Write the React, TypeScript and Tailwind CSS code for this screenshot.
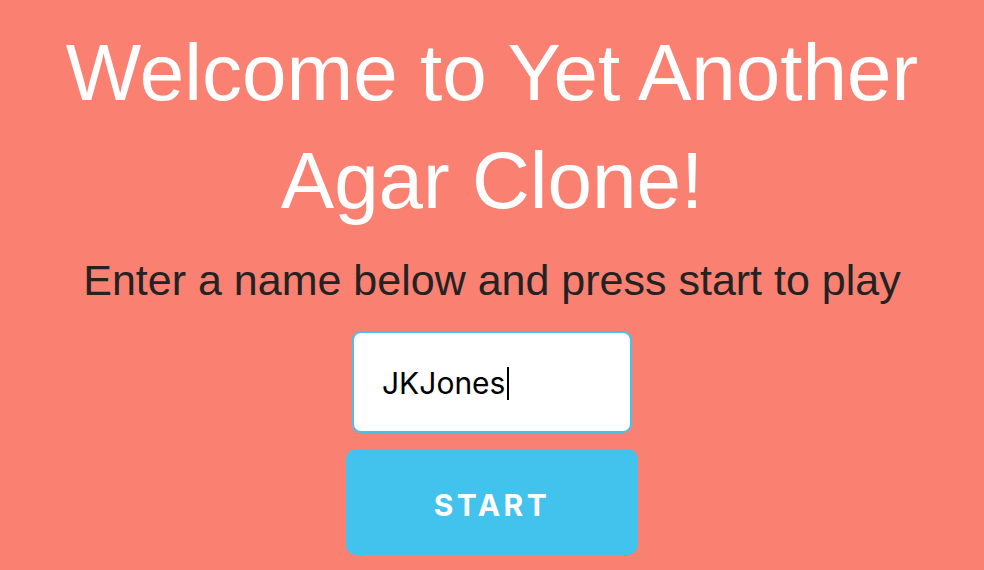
import React from "react";

export default function App() {
  return (
    <div className="w-[984px] h-[570px] overflow-hidden bg-[#fa8072] flex flex-col items-center font-['Liberation_Sans',Arial,sans-serif]">
      <h1 className="mt-[19px] w-[920px] text-center text-white text-[80px] leading-[108px] font-normal">
        Welcome to Yet Another Agar Clone!
      </h1>
      <p className="mt-[21px] text-center text-[#232323] text-[43px] leading-[48px]">
        Enter a name below and press start to play
      </p>
      <div className="mt-[27px] w-[280px] h-[102px] rounded-[9px] border-2 border-[#41c3ee] bg-white flex items-center pl-[28px] pt-[2px]">
        <span className="text-[30px] text-black leading-none font-['Inter','Noto_Sans',sans-serif]">
          JKJones
        </span>
        <span className="ml-[2px] w-[2px] h-[33px] bg-black" />
      </div>
      <button className="mt-[16px] w-[292px] h-[106px] rounded-[10px] bg-[#41c3ee] text-white text-[30px] font-bold tracking-[3.5px] flex items-center justify-center pt-[6px] font-['Inter','Noto_Sans',sans-serif]">
        START
      </button>
    </div>
  );
}
